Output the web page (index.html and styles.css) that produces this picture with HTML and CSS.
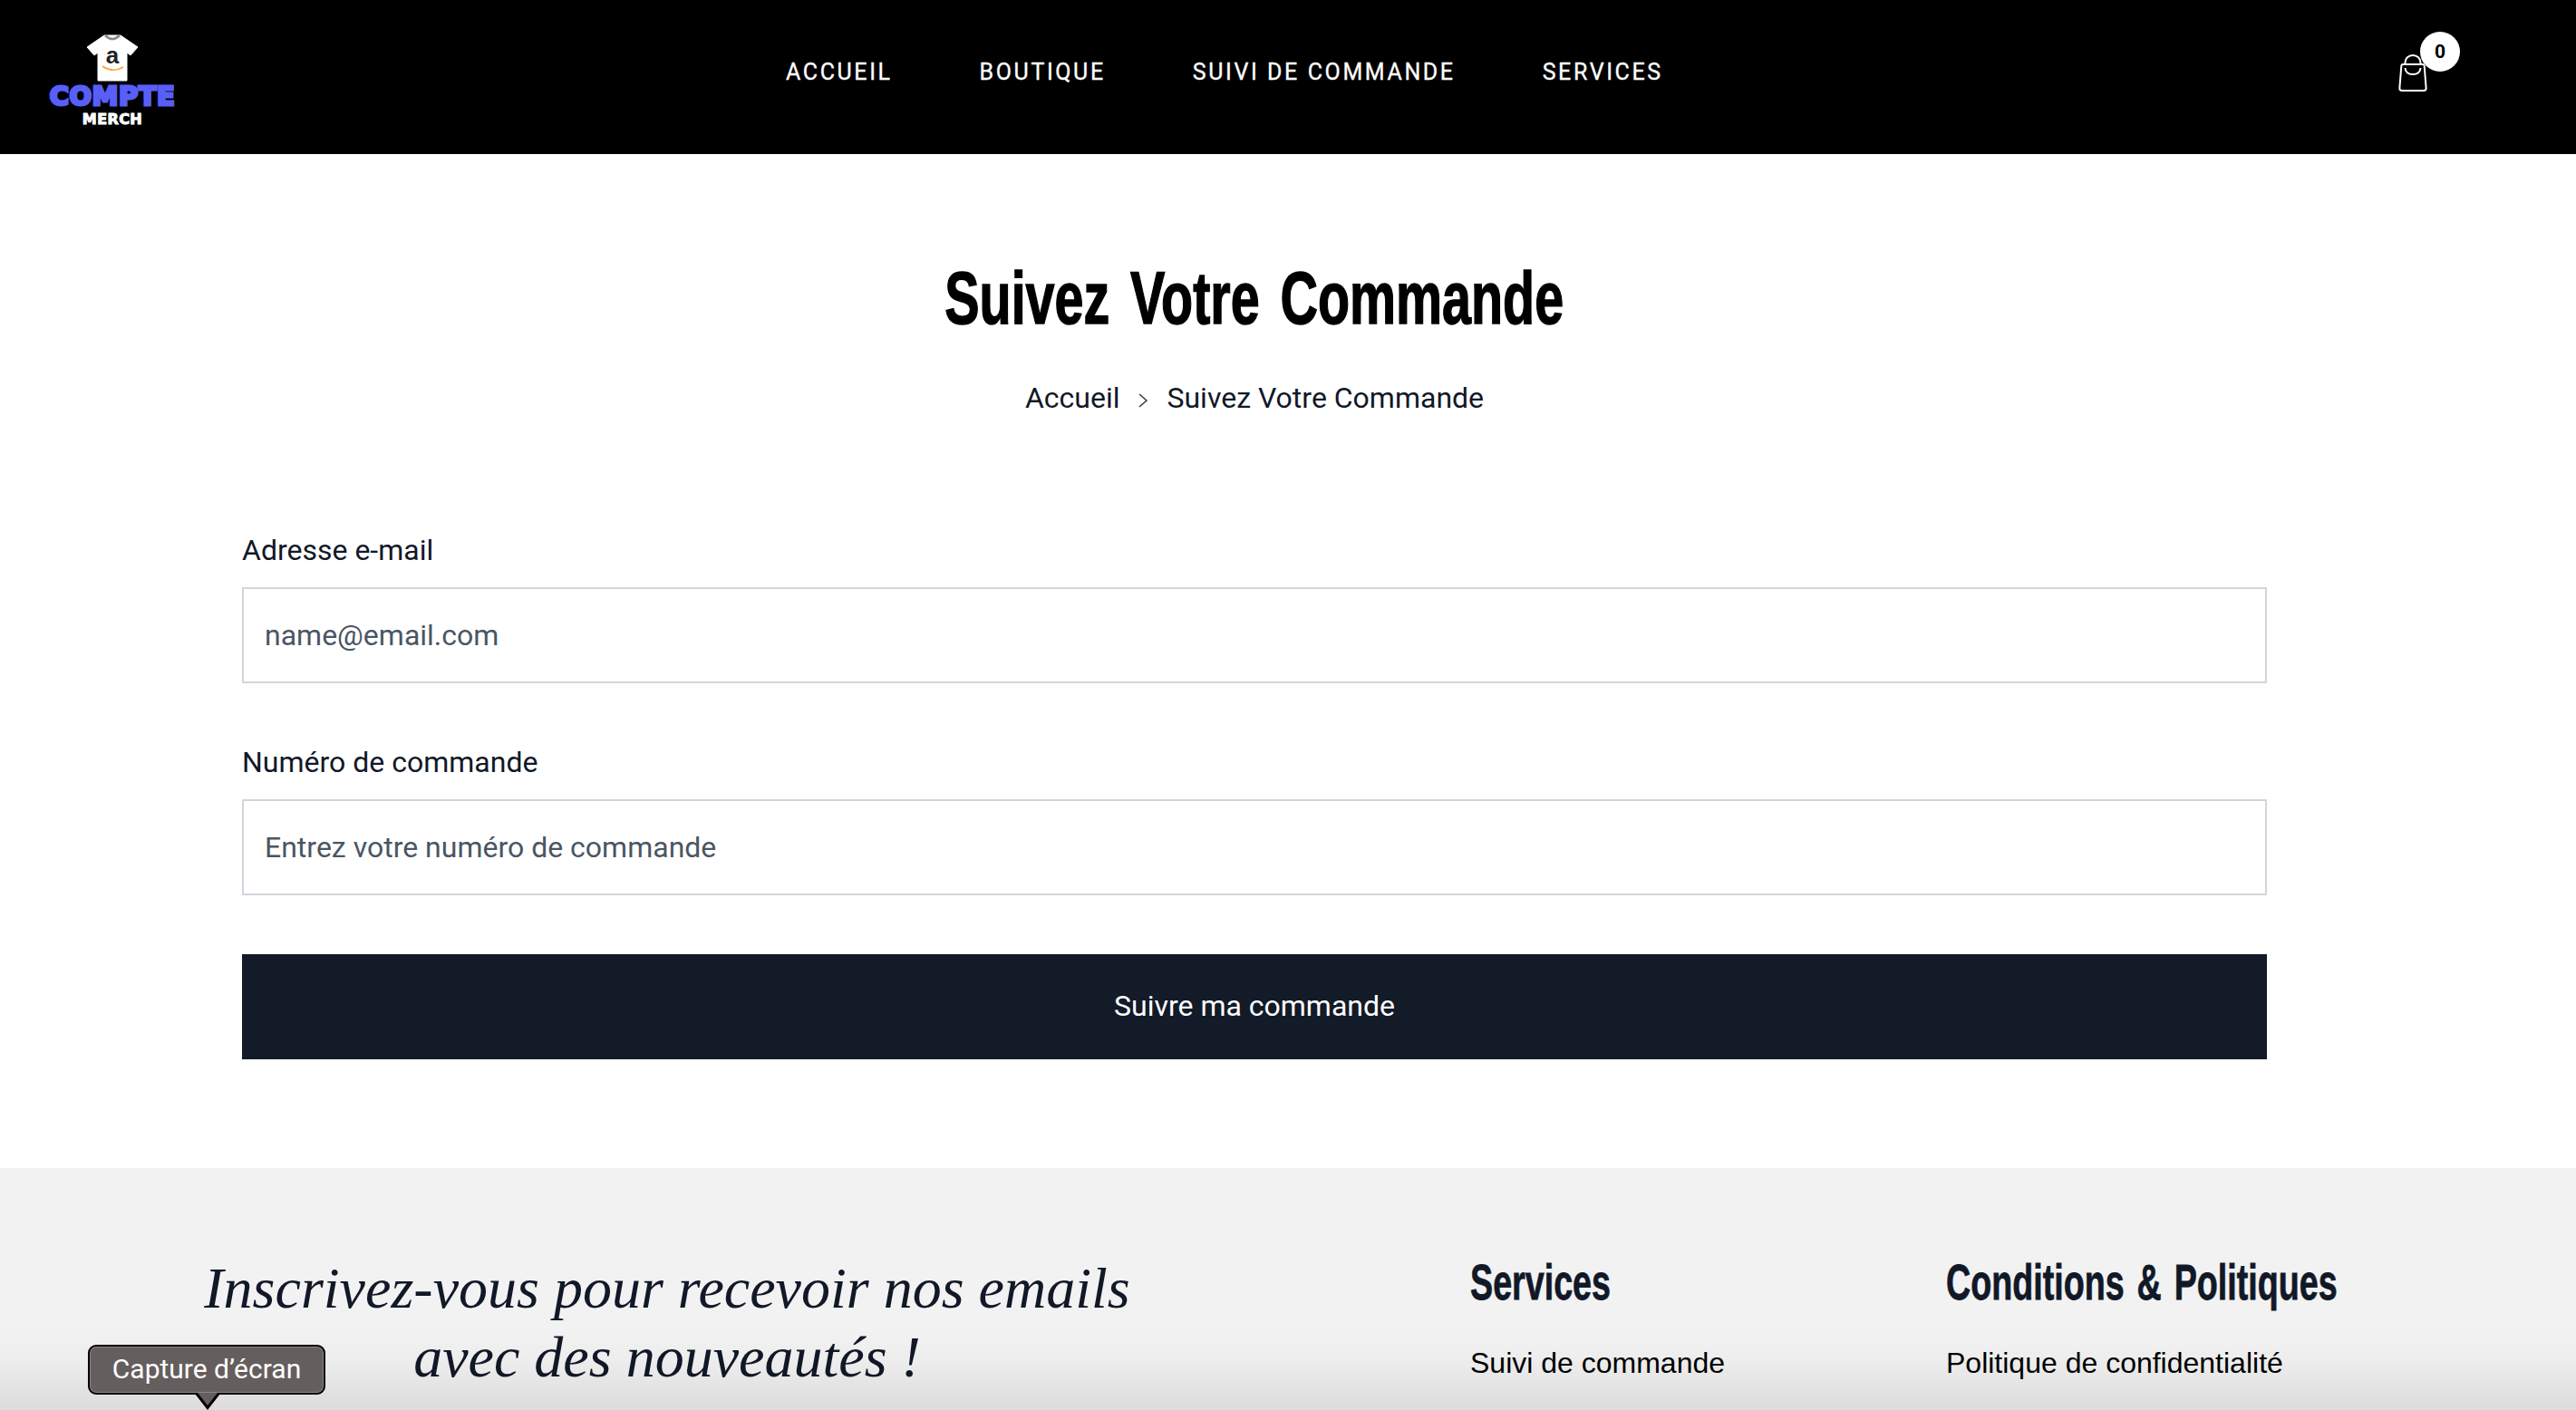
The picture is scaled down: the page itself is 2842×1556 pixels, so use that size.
FILE: index.html
```html
<!DOCTYPE html>
<html lang="fr">
<head>
    <meta charset="UTF-8">
    <meta name="viewport" content="width=device-width, initial-scale=1.0">
    <title>Suivez Votre Commande</title>
    <link rel="stylesheet" href="styles.css">
</head>
<body>

    <header class="site-header">
        <a class="logo" href="#">
            <svg class="logo-shirt" viewBox="0 0 58 52" width="58" height="52">
                <path d="M20 1 L38 1 L57 14 L49 23 L45 20 L45 51 L13 51 L13 20 L9 23 L1 14 Z" fill="#fff" stroke="#fff" stroke-linejoin="round"/>
                <path d="M21 1 Q29 9 37 1" fill="none" stroke="#8a8a8a" stroke-width="2.5"/>
                <text class="logo-a" x="29" y="32" text-anchor="middle">a</text>
                <path d="M18 35 Q30 43 41 36" fill="none" stroke="#f2a72e" stroke-width="1.6"/>
            </svg>
            <span class="logo-compte">COMPTE</span>
            <span class="logo-merch">MERCH</span>
        </a>

        <nav class="main-nav">
            <a href="#">ACCUEIL</a>
            <a href="#">BOUTIQUE</a>
            <a href="#">SUIVI DE COMMANDE</a>
            <a href="#">SERVICES</a>
        </nav>

        <a class="cart" href="#">
            <svg class="cart-bag" viewBox="0 0 32 41" width="32" height="41">
                <path d="M5 11 H27 Q28.5 11 28.7 13 L30.6 37 Q30.8 40 28 40 H4 Q1.2 40 1.4 37 L3.3 13 Q3.5 11 5 11 Z" fill="none" stroke="#fff" stroke-width="2"/>
                <path d="M7.5 11 V9 A8.5 8 0 0 1 24.5 9 V11" fill="none" stroke="#fff" stroke-width="2"/>
                <path d="M7.5 15 Q8 22 16 22 Q24 22 24.5 15" fill="none" stroke="#fff" stroke-width="2"/>
            </svg>
            <span class="cart-count">0</span>
        </a>
    </header>

    <main class="track-page">
        <h1><span>Suivez Votre Commande</span></h1>
        <div class="breadcrumb">
            <a href="#">Accueil</a>
            <svg viewBox="0 0 12 18" width="12" height="18"><path d="M2 2 L10 9 L2 16" fill="none" stroke="#374151" stroke-width="1.6"/></svg>
            <span>Suivez Votre Commande</span>
        </div>

        <form class="track-form">
            <label for="email">Adresse e-mail</label>
            <input type="text" id="email" placeholder="name@email.com">
            <label for="order">Numéro de commande</label>
            <input type="text" id="order" placeholder="Entrez votre numéro de commande">
            <button type="button" class="btn">Suivre ma commande</button>
        </form>
    </main>

    <footer class="site-footer">
        <h2 class="newsletter">Inscrivez-vous pour recevoir nos emails<br>avec des nouveautés !</h2>
        <div class="footer-col services-col">
            <h3>Services</h3>
            <a href="#">Suivi de commande</a>
        </div>
        <div class="footer-col">
            <h3>Conditions &amp; Politiques</h3>
            <a href="#">Politique de confidentialité</a>
        </div>
    </footer>

    <div class="screen-shade"></div>
    <div class="capture-tip">Capture d’écran</div>

</body>
</html>
```

FILE: styles.css
```css
* {
    margin: 0;
    padding: 0;
    box-sizing: border-box;
}

html, body {
    height: 1556px;
    overflow: hidden;
}

body {
    font-family: 'Roboto', sans-serif;
    font-size: 32px;
    color: #111827;
    background: #fff;
}

a {
    color: inherit;
    text-decoration: none;
}

/* header */
.site-header {
    display: flex;
    height: 170px;
    background: #000;
    color: #fff;
    padding-left: 56px;
}

.logo {
    display: flex;
    flex-direction: column;
    align-items: center;
    width: 136px;
    padding-top: 38px;
}

.logo-shirt {
    display: block;
}

.logo-a {
    font-family: 'Liberation Sans', sans-serif;
    font-size: 26px;
    font-weight: 700;
    fill: #222;
}

.logo-compte {
    font-family: 'DejaVu Sans', sans-serif;
    font-size: 29px;
    font-weight: 700;
    line-height: 26px;
    margin-top: 3px;
    color: #585ff8;
    letter-spacing: 0.5px;
    -webkit-text-stroke: 3px #585ff8;
    white-space: nowrap;
}

.logo-merch {
    font-family: 'DejaVu Sans', sans-serif;
    font-size: 16px;
    font-weight: 700;
    line-height: 14px;
    margin-top: 6px;
    letter-spacing: 0.4px;
    -webkit-text-stroke: 1px #fff;
}

.main-nav {
    display: flex;
    gap: 96px;
    height: 100%;
    padding-left: 675px;
    padding-top: 64px;
    font-size: 25px;
    letter-spacing: 2.6px;
    line-height: 32px;
    white-space: nowrap;
    -webkit-text-stroke: 0.3px #fff;
}

.cart {
    position: relative;
    margin-left: auto;
    margin-right: 164px;
    width: 32px;
    padding-top: 60px;
}

.cart-bag {
    display: block;
}

.cart-count {
    position: absolute;
    left: 24px;
    top: 35px;
    width: 44px;
    height: 44px;
    border-radius: 50%;
    background: #fff;
    color: #000;
    font-size: 21px;
    font-weight: 700;
    line-height: 44px;
    text-align: center;
}

/* order tracking */
.track-page {
    padding: 109px 341px 0 267px;
    height: 1119px;
    text-align: center;
}

h1 {
    font-family: 'Liberation Sans', sans-serif;
    font-size: 82px;
    font-weight: 700;
    line-height: 100px;
    color: #000;
}

/* no condensed family available, so squeeze the sans */
h1 span {
    display: inline-block;
    white-space: nowrap;
    word-spacing: 10px;
    transform: scaleX(0.7);
    -webkit-text-stroke: 1.5px #000;
}

.breadcrumb {
    display: flex;
    justify-content: center;
    align-items: center;
    gap: 20px;
    margin-top: 38px;
    line-height: 44px;
}

.breadcrumb svg {
    margin-top: 6px;
}

.track-form {
    margin-top: 124px;
    text-align: left;
}

.track-form label {
    display: block;
    line-height: 44px;
    margin-bottom: 19px;
}

.track-form input {
    display: block;
    width: 100%;
    height: 106px;
    padding: 0 24px 0 23px;
    border: 2px solid #d1d5db;
    font-family: inherit;
    font-size: 32px;
    color: #111827;
    margin-bottom: 65px;
}

.track-form input::placeholder {
    color: #4b5563;
    opacity: 1;
}

.btn {
    display: block;
    width: 100%;
    height: 116px;
    padding-bottom: 2px;
    border: none;
    background: #131a28;
    color: #fff;
    font-family: inherit;
    font-size: 32px;
    font-weight: 400;
    cursor: pointer;
}

/* footer */
.site-footer {
    display: flex;
    height: 267px;
    background: #f2f2f2;
}

.newsletter {
    width: 1622px;
    padding: 95px 150px 0 0;
    font-family: 'Liberation Serif', serif;
    font-size: 64px;
    font-style: italic;
    font-weight: 400;
    line-height: 76px;
    text-align: center;
    white-space: nowrap;
}

.footer-col {
    padding-top: 98px;
}

.services-col {
    width: 525px;
}

.footer-col h3 {
    font-family: 'Liberation Sans', sans-serif;
    font-size: 55px;
    font-weight: 700;
    line-height: 56px;
    white-space: nowrap;
    word-spacing: 5px;
    transform: scaleX(0.685);
    transform-origin: left center;
    -webkit-text-stroke: 0.8px #111827;
}

.footer-col a {
    display: block;
    margin-top: 39px;
    font-family: 'Liberation Sans', Arial, sans-serif;
    font-size: 32px;
    line-height: 44px;
    color: #000;
}

/* macOS screenshot overlay */
.screen-shade {
    position: fixed;
    left: 0;
    right: 0;
    bottom: 0;
    height: 90px;
    background: linear-gradient(rgba(0, 0, 0, 0), rgba(0, 0, 0, 0.02) 40%, rgba(0, 0, 0, 0.09));
    pointer-events: none;
}

.capture-tip {
    position: fixed;
    left: 97px;
    top: 1484px;
    width: 262px;
    height: 55px;
    background: #655e5e;
    border: 2px solid #000;
    border-radius: 9px;
    box-shadow: inset 0 0 0 1px #8a8585;
    color: #fff;
    font-size: 30px;
    line-height: 50px;
    text-align: center;
}

/* tail: black outline with the grey fill on top */
.capture-tip::before,
.capture-tip::after {
    content: '';
    position: absolute;
    left: 50%;
    width: 0;
    height: 0;
}

.capture-tip::before {
    bottom: -19px;
    margin-left: -13px;
    border-left: 14px solid transparent;
    border-right: 14px solid transparent;
    border-top: 18px solid #000;
}

.capture-tip::after {
    bottom: -14px;
    margin-left: -10px;
    border-left: 11px solid transparent;
    border-right: 11px solid transparent;
    border-top: 14px solid #655e5e;
}
```
